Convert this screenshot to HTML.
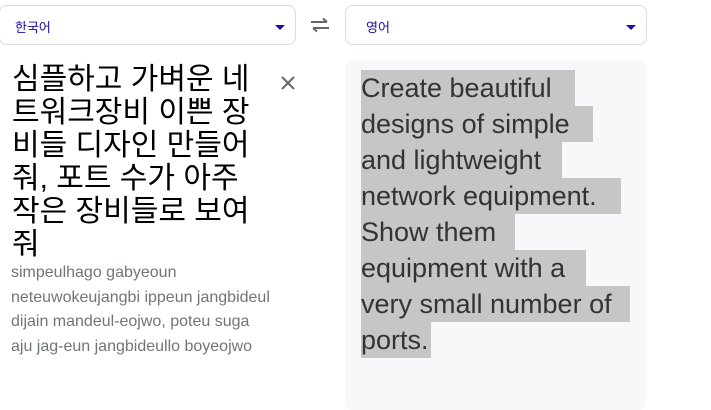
<!DOCTYPE html>
<html><head><meta charset="utf-8"><style>
body{margin:0;width:711px;height:400px;background:#fff;position:relative;overflow:hidden;font-family:"Liberation Sans","Noto Sans CJK KR",sans-serif}
.sel{position:absolute;top:5px;height:40px;border:1px solid #dadce0;border-radius:8px;box-sizing:border-box}
.sel span{position:absolute;left:14px;top:11px;font-size:13px;color:#1a0dab}
.sel i{position:absolute;right:10px;top:19px;width:0;height:0;border-left:5px solid transparent;border-right:5px solid transparent;border-top:5px solid #1a0dab}
.ko{position:absolute;left:12px;top:63px;font-size:30px;line-height:33px;color:#000;white-space:nowrap}
.rom{position:absolute;left:11px;top:261px;font-size:16px;line-height:24.5px;color:#70757a;white-space:nowrap}
.panel{position:absolute;left:345px;top:60px;width:301px;height:350px;background:#f7f8fa;border-radius:8px}
.en{position:absolute;left:361px;top:70px;font-size:27px;color:#333}
.en div{background:#c5c6c5;height:36px;line-height:36px;white-space:nowrap}
</style></head><body>
<div class="sel" style="left:-1px;width:297px"><span style="left:15px">한국어</span><i></i></div>
<svg style="position:absolute;left:309px;top:17px" width="22" height="16" viewBox="0 0 22 16"><path d="M2 5h16M14 1.5l4 3.5M20 11H4M8 14.5L4 11" stroke="#666" stroke-width="2" fill="none"/></svg>
<div class="sel" style="left:345px;width:302px"><span style="left:20px">영어</span><i></i></div>
<div class="ko">심플하고 가벼운 네<br>트워크장비 이쁜 장<br>비들 디자인 만들어<br>줘, 포트 수가 아주<br>작은 장비들로 보여<br>줘</div>
<svg style="position:absolute;left:280px;top:75px" width="16" height="16" viewBox="0 0 16 16"><path d="M2 2L14 14M14 2L2 14" stroke="#666" stroke-width="2"/></svg>
<div class="rom">simpeulhago gabyeoun<br>neteuwokeujangbi ippeun jangbideul<br>dijain mandeul-eojwo, poteu suga<br>aju jag-eun jangbideullo boyeojwo</div>
<div class="panel"></div>
<div class="en">
<div style="width:214px">Create beautiful</div>
<div style="width:232px">designs of simple</div>
<div style="width:201px">and lightweight</div>
<div style="width:260px">network equipment.</div>
<div style="width:154px">Show them</div>
<div style="width:225px">equipment with a</div>
<div style="width:269px">very small number of</div>
<div style="width:70px">ports.</div>
</div>
</body></html>
